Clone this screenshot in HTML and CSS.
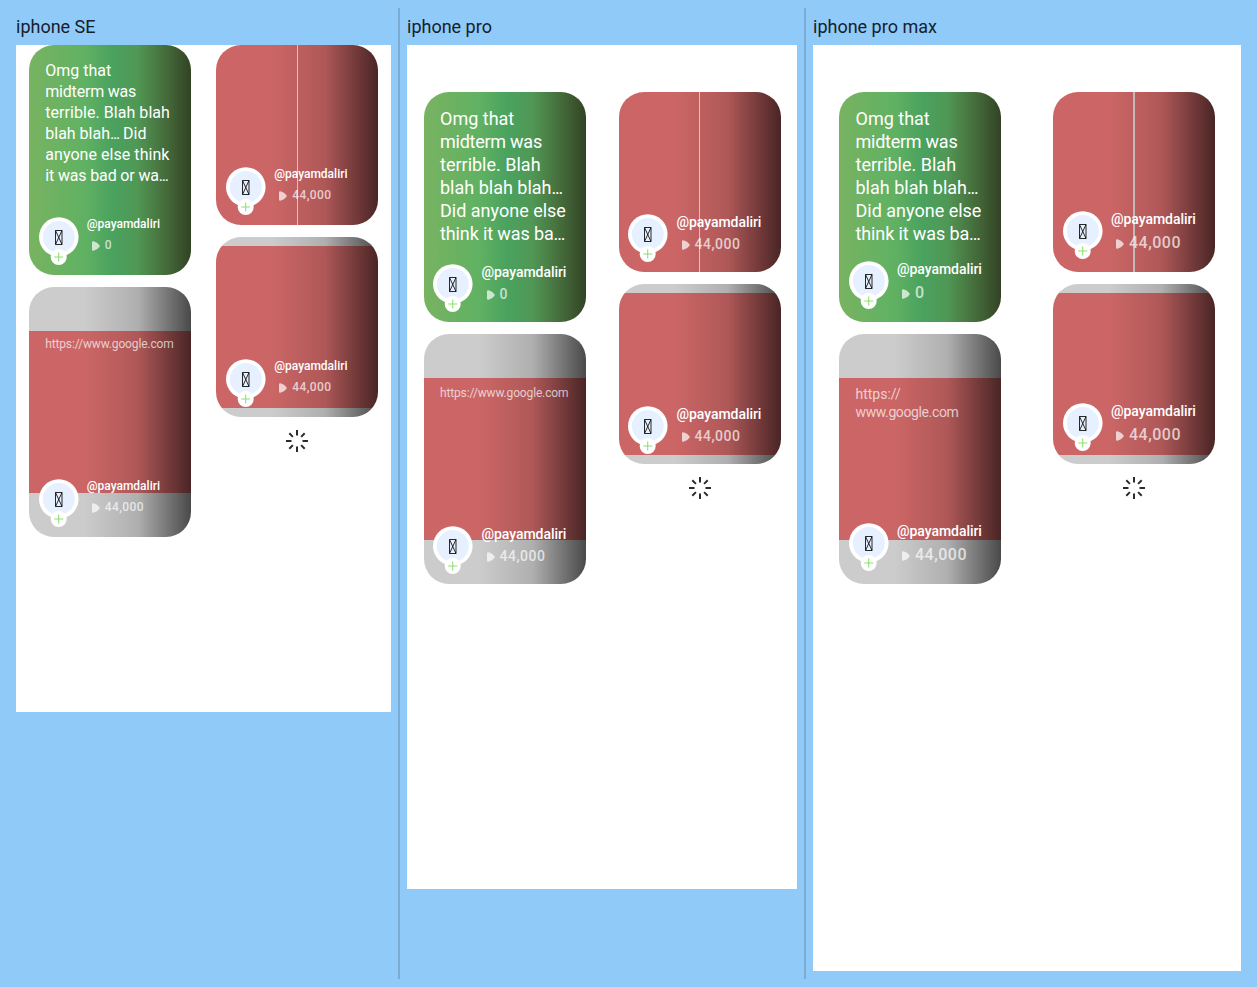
FILE: index.html
```html
<!DOCTYPE html>
<html lang="en">
<head>
<meta charset="utf-8">
<title>Feed on devices</title>
<link rel="stylesheet" href="styles.css">
</head>
<body>
<svg class="defs" aria-hidden="true">
  <symbol id="avatar" viewBox="0 0 40 50">
    <circle cx="19.800" cy="20" r="19.800" fill="#fff"/>
    <circle cx="19.800" cy="20" r="16" fill="#e7f0ff"/>
    <path d="M16.500 13.500h6.500v14h-6.500zM16.500 13.500l6.500 14M23 13.500l-6.500 14" fill="none" stroke="#111" stroke-width=".9"/>
    <circle cx="19.700" cy="40" r="8" fill="#fff"/>
    <path d="M19.700 35.500v9M15.200 40h9" stroke="#8fe070" stroke-width="1.100"/>
  </symbol>
  <symbol id="play" viewBox="0 0 8 10">
    <path d="M0 1.500Q0 0 1.500 .3Q5.500 1.300 7.500 4.300Q8 5 7.500 5.700Q5.500 8.700 1.500 9.700Q0 10 0 8.500z" fill="currentColor"/>
  </symbol>
  <symbol id="spinner" viewBox="0 0 22 22">
    <path d="M11 0v5.500M11 16.500V22M0 11h5.500M16.500 11H22M3.300 3.300l3.600 3.600M15.100 15.100l3.600 3.600M18.700 3.300l-3.600 3.600M6.900 15.100l-3.600 3.600" stroke="#2b2b2b" stroke-width="2"/>
  </symbol>
</svg>
<main class="stage">
  <section class="preview se">
    <h2 class="label">iphone SE</h2>
    <div class="screen">
      <div class="col">
        <article class="card note">
          <p class="text"><span class="a">Omg that</span><span class="b">midterm was</span><span class="c">terrible. Blah blah</span><span class="d">blah blah<i>...</i> Did</span><span class="e">anyone else think</span><span class="f">it was bad or wa<i>...</i></span></p>
          <footer class="user"><svg class="avatar"><use href="#avatar"/></svg><div class="meta"><b class="name">@payamdaliri</b><span class="plays"><svg class="play"><use href="#play"/></svg>0</span></div></footer>
        </article>
        <article class="card link">
          <p class="url">https://www.google.com</p>
          <footer class="user"><svg class="avatar"><use href="#avatar"/></svg><div class="meta"><b class="name">@payamdaliri</b><span class="plays"><svg class="play"><use href="#play"/></svg>44,000</span></div></footer>
        </article>
      </div>
      <div class="col">
        <article class="card pair">
          <footer class="user"><svg class="avatar"><use href="#avatar"/></svg><div class="meta"><b class="name">@payamdaliri</b><span class="plays"><svg class="play"><use href="#play"/></svg>44,000</span></div></footer>
        </article>
        <article class="card photo">
          <footer class="user"><svg class="avatar"><use href="#avatar"/></svg><div class="meta"><b class="name">@payamdaliri</b><span class="plays"><svg class="play"><use href="#play"/></svg>44,000</span></div></footer>
        </article>
        <svg class="spinner"><use href="#spinner"/></svg>
      </div>
    </div>
  </section>
  <div class="divider"></div>
  <section class="preview pro">
    <h2 class="label">iphone pro</h2>
    <div class="screen">
      <div class="col">
        <article class="card note">
          <p class="text"><span class="a">Omg that</span><span class="b">midterm was</span><span class="c">terrible. Blah</span><span class="d">blah blah blah<i>...</i></span><span class="e">Did anyone else</span><span class="f">think it was ba<i>...</i></span></p>
          <footer class="user"><svg class="avatar"><use href="#avatar"/></svg><div class="meta"><b class="name">@payamdaliri</b><span class="plays"><svg class="play"><use href="#play"/></svg>0</span></div></footer>
        </article>
        <article class="card link">
          <p class="url">https://www.google.com</p>
          <footer class="user"><svg class="avatar"><use href="#avatar"/></svg><div class="meta"><b class="name">@payamdaliri</b><span class="plays"><svg class="play"><use href="#play"/></svg>44,000</span></div></footer>
        </article>
      </div>
      <div class="col">
        <article class="card pair">
          <footer class="user"><svg class="avatar"><use href="#avatar"/></svg><div class="meta"><b class="name">@payamdaliri</b><span class="plays"><svg class="play"><use href="#play"/></svg>44,000</span></div></footer>
        </article>
        <article class="card photo">
          <footer class="user"><svg class="avatar"><use href="#avatar"/></svg><div class="meta"><b class="name">@payamdaliri</b><span class="plays"><svg class="play"><use href="#play"/></svg>44,000</span></div></footer>
        </article>
        <svg class="spinner"><use href="#spinner"/></svg>
      </div>
    </div>
  </section>
  <div class="divider"></div>
  <section class="preview max">
    <h2 class="label">iphone pro max</h2>
    <div class="screen">
      <div class="col">
        <article class="card note">
          <p class="text"><span class="a">Omg that</span><span class="b">midterm was</span><span class="c">terrible. Blah</span><span class="d">blah blah blah<i>...</i></span><span class="e">Did anyone else</span><span class="f">think it was ba<i>...</i></span></p>
          <footer class="user"><svg class="avatar"><use href="#avatar"/></svg><div class="meta"><b class="name">@payamdaliri</b><span class="plays"><svg class="play"><use href="#play"/></svg>0</span></div></footer>
        </article>
        <article class="card link">
          <p class="url">https://<br><span class="host">www.google.com</span></p>
          <footer class="user"><svg class="avatar"><use href="#avatar"/></svg><div class="meta"><b class="name">@payamdaliri</b><span class="plays"><svg class="play"><use href="#play"/></svg>44,000</span></div></footer>
        </article>
      </div>
      <div class="col">
        <article class="card pair">
          <footer class="user"><svg class="avatar"><use href="#avatar"/></svg><div class="meta"><b class="name">@payamdaliri</b><span class="plays"><svg class="play"><use href="#play"/></svg>44,000</span></div></footer>
        </article>
        <article class="card photo">
          <footer class="user"><svg class="avatar"><use href="#avatar"/></svg><div class="meta"><b class="name">@payamdaliri</b><span class="plays"><svg class="play"><use href="#play"/></svg>44,000</span></div></footer>
        </article>
        <svg class="spinner"><use href="#spinner"/></svg>
      </div>
    </div>
  </section>
</main>
</body>
</html>
```
FILE: styles.css
```css
* { box-sizing: border-box; }
body {
  margin: 0;
  height: 987px;
  background: #90caf9;
  font-family: Roboto, sans-serif;
  overflow: hidden;
}
.defs { display: none; }
.stage { display: flex; gap: 7px; height: 987px; padding: 8px 16px; }
.divider { flex: none; width: 2px; background: #79abd3; }
.preview { flex: none; }
.label {
  margin: 0;
  height: 37px;
  padding-top: 7px;
  font-size: 18px;
  font-weight: 400;
  line-height: 24px;
  color: #16202a;
}
.screen { display: flex; background: #fff; }
.col { flex: 1; display: flex; flex-direction: column; align-items: center; gap: 12px; }

.card {
  --shade: linear-gradient(90deg, transparent 34%, rgba(0,0,0,.14) 67%, rgba(0,0,0,.64) 100%);
  display: flex;
  flex-direction: column;
  justify-content: space-between;
  width: 162px;
  border-radius: 25px;
  overflow: hidden;
  color: #fff;
}
.note { height: 230px; background: var(--shade), linear-gradient(90deg, #78b361, #5fb163 36%, #50af66 52%, #60b062 70%, #88b864); }
.link { height: 250px; background: var(--shade), linear-gradient(#c66, #c66) 0 44px / 100% 162px no-repeat, #ccc; }
.pair, .photo { height: 180px; justify-content: flex-end; }
.pair { background: linear-gradient(#ccc, #ccc) 81px 0 / 1px 100% no-repeat, var(--shade), #c66; }
.photo { background: var(--shade), linear-gradient(#c66, #c66) 0 9px / 100% 162px no-repeat, #ccc; }

.text, .url { margin: 0; padding-left: 16.5px; white-space: nowrap; }
.text span { display: block; }
.text i { font-style: normal; letter-spacing: -1.2px; }
.url { color: rgba(255,255,255,.7); }

.user { display: flex; gap: 8px; height: 58px; padding-left: 10px; }
.avatar { flex: none; width: 40px; height: 50px; }
.meta { display: flex; flex-direction: column; }
.name { font-weight: 500; white-space: nowrap; }
.plays { display: flex; align-items: center; gap: 5px; padding-left: 5px; color: rgba(255,255,255,.7); font-weight: 500; }
.play { width: 8px; height: 10px; margin-top: 2px; }
.spinner { width: 22px; height: 22px; margin-top: 1px; }

.se .screen { width: 375px; height: 667px; }
.se .text { padding-top: 15px; font-size: 16px; line-height: 21px; }
.se .b { letter-spacing: -.2px; }
.se .c, .se .e { letter-spacing: .05px; }
.se .f { letter-spacing: -.15px; }
.se .url { padding-top: 48px; font-size: 12px; line-height: 18px; letter-spacing: -.15px; }
.se .name { font-size: 12px; line-height: 14px; }
.se .plays { padding-top: 7px; font-size: 12px; line-height: 14px; letter-spacing: .4px; }

.pro .screen { width: 390px; height: 844px; padding-top: 47px; }
.pro .text, .max .text { padding-top: 15px; font-size: 18px; line-height: 23px; }
.pro .b, .max .b { letter-spacing: -.25px; }
.pro .f, .max .f { letter-spacing: -.12px; }
.pro .url { padding-top: 50px; font-size: 12px; line-height: 18px; letter-spacing: -.15px; }
.pro .user { gap: 8.5px; padding-left: 9.5px; }
.pro .pair { background-position: 80px 0, 0 0; }
.pro .name, .max .name { font-size: 14px; line-height: 17px; letter-spacing: -.05px; }
.pro .plays { padding-top: 4px; font-size: 14px; line-height: 18px; letter-spacing: .5px; }

.max .screen { width: 428px; height: 926px; padding-top: 47px; }
.max .url { padding-top: 51px; font-size: 14px; line-height: 18px; }
.max .host { letter-spacing: -.38px; }
.max .user { height: 61px; }
.max .plays { padding-top: 5px; font-size: 16px; line-height: 20px; letter-spacing: .5px; }
.max .pair { background: linear-gradient(#c4b8b6, #c4b8b6) 80px 0 / 2px 100% no-repeat, var(--shade), #c66; }
```
